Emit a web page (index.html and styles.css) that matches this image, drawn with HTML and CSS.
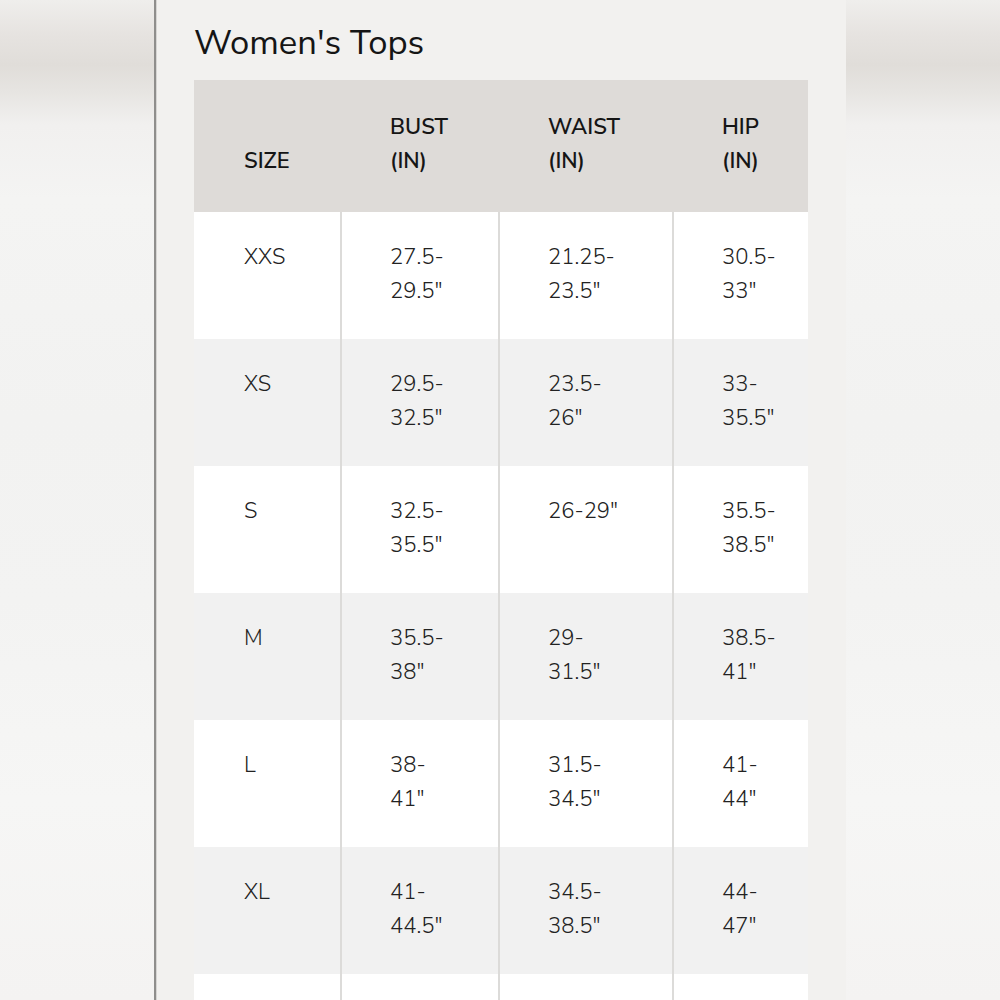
FILE: index.html
```html
<!DOCTYPE html>
<html lang="en">
<head>
<meta charset="utf-8">
<title>Women's Tops</title>
<link rel="stylesheet" href="styles.css">
</head>
<body>
<div class="stage">
  <div class="side side-left"></div>
  <main class="panel">
    <h1 class="title">Women's Tops</h1>
    <table class="chart">
      <colgroup>
        <col class="c1"><col class="c2"><col class="c3"><col class="c4">
      </colgroup>
      <thead>
        <tr>
          <th>SIZE</th>
          <th>BUST<br>(IN)</th>
          <th>WAIST<br>(IN)</th>
          <th>HIP<br>(IN)</th>
        </tr>
      </thead>
      <tbody>
        <tr><td>XXS</td><td>27.5-<br>29.5"</td><td>21.25-<br>23.5"</td><td>30.5-<br>33"</td></tr>
        <tr><td>XS</td><td>29.5-<br>32.5"</td><td>23.5-<br>26"</td><td>33-<br>35.5"</td></tr>
        <tr><td>S</td><td>32.5-<br>35.5"</td><td>26-29"</td><td>35.5-<br>38.5"</td></tr>
        <tr><td>M</td><td>35.5-<br>38"</td><td>29-<br>31.5"</td><td>38.5-<br>41"</td></tr>
        <tr><td>L</td><td>38-<br>41"</td><td>31.5-<br>34.5"</td><td>41-<br>44"</td></tr>
        <tr><td>XL</td><td>41-<br>44.5"</td><td>34.5-<br>38.5"</td><td>44-<br>47"</td></tr>
        <tr class="cut"><td></td><td></td><td></td><td></td></tr>
      </tbody>
    </table>
  </main>
  <div class="side side-right"></div>
</div>
</body>
</html>
```

FILE: styles.css
```css
html, body {
  margin: 0;
  padding: 0;
}
body {
  width: 1000px;
  height: 1000px;
  overflow: hidden;
  font-family: "Nunito Sans", Lato, "Noto Sans", sans-serif;
  background: #f3f2f1;
}
.stage {
  display: flex;
  height: 1000px;
}
.side {
  flex: 0 0 auto;
  height: 1000px;
  background:
    linear-gradient(180deg, #efeeec 0px, #e6e3e0 35px, #e0ddd9 65px, #e6e4e1 90px, #f1f0ef 125px, #f4f4f3 200px, #f2f2f1 420px, #f3f3f2 600px, #f6f6f5 800px, #f4f3f2 1000px);
}
.side-left {
  width: 154px;
}
.side-right {
  width: 154px;
  flex: 1 1 auto;
}
.panel {
  width: 652px;
  height: 1000px;
  padding-left: 38px;
  background: #f2f1ef;
  border-left: 2px solid #8f8e8c;
  box-shadow: inset 1px 0 0 #d6d5d3;
}
.title {
  margin: 0;
  padding-top: 23px;
  height: 80px;
  box-sizing: border-box;
  font-size: 34.6px;
  line-height: 40px;
  font-weight: 400;
  color: #151515;
}
.chart {
  width: 614px;
  table-layout: fixed;
  border-collapse: separate;
  border-spacing: 0;
  font-size: 22px;
  line-height: 34px;
  color: #222222;
}
.c1 { width: 146px; }
.c2 { width: 158px; }
.c3 { width: 174px; }
.c4 { width: 136px; }
.chart th {
  background: #dedbd8;
  text-align: left;
  vertical-align: bottom;
  font-weight: 600;
  color: #151515;
  padding: 30px 0 34px 50px;
  height: 68px;
}
.chart td {
  vertical-align: top;
  padding: 28px 0 0 48px;
  height: 99px;
  box-sizing: content-box;
  border-left: 2px solid #dcdbd9;
  background: #ffffff;
  font-weight: 300;
}
.chart td:first-child {
  border-left: none;
  padding-left: 50px;
}
.chart tbody tr:nth-child(even) td {
  background: #f1f1f1;
}
```
